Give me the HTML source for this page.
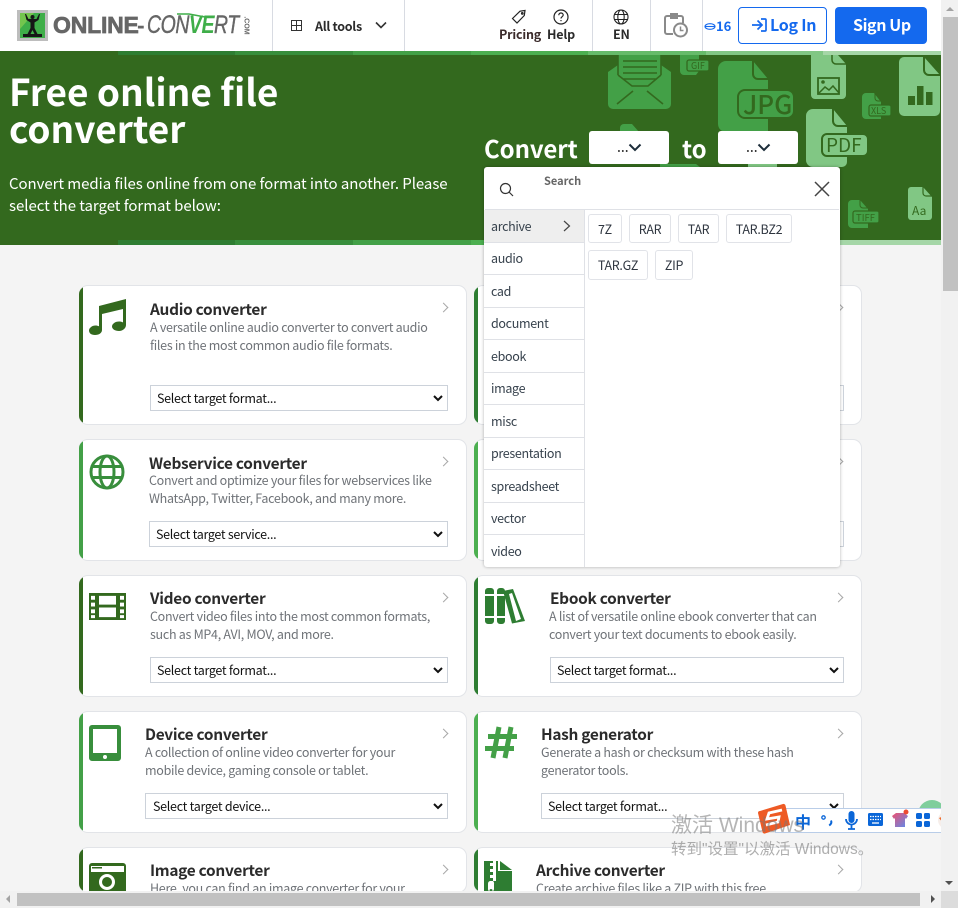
<!DOCTYPE html>
<html lang="en"><head><meta charset="utf-8"><title>Online-Convert</title>
<style>
*{box-sizing:border-box;margin:0;padding:0}
html,body{width:958px;height:908px;overflow:hidden;background:#f4f4f4}
body{position:relative;font-family:"Noto Sans CJK JP","Liberation Sans",sans-serif;color:#212529}
.a{position:absolute}
.t{position:absolute;white-space:nowrap}
.div{position:absolute;top:0;width:1px;height:51px;background:#d8dbe2}
.card{position:absolute;width:388px;background:#fff;border:1px solid #e2e4e8;border-left:0;border-radius:9px;overflow:hidden}
.card i{position:absolute;left:0;top:-1px;bottom:-1px;width:4px;display:block}
.card h3{position:absolute;font-size:15.4px;line-height:20px;font-weight:700;color:#2b2b2b;white-space:nowrap;letter-spacing:-.28px;margin-top:-1px}
.card p{position:absolute;font-size:12.5px;line-height:18px;color:#6f7378;white-space:nowrap;letter-spacing:-.29px}
.card select{position:absolute;height:26px;background:#fff;border:1px solid #ccd2da;font:12.5px "Noto Sans CJK JP",sans-serif;letter-spacing:-.29px;color:#111;padding-left:6px;border-radius:0;line-height:18px;appearance:none;-webkit-appearance:none}
.card svg.ar{position:absolute;width:10px;height:7px}
.card b.c{position:absolute;top:18px;right:19px;width:7px;height:7px;border-top:1.4px solid #a8a8a8;border-right:1.4px solid #a8a8a8;transform:rotate(45deg)}
.li{position:absolute;left:0;width:100px;height:32.5px;border-bottom:1px solid #dfe1e6;font-size:12.5px;letter-spacing:-.33px;line-height:31px;padding-left:7px;color:#37424d}
.chip{position:absolute;height:29px;border:1px solid #e1e3e8;border-radius:3px;font-size:12.5px;letter-spacing:-.3px;line-height:27px;text-align:center;color:#2f3640;background:#fff}
.n{font-size:12.5px;line-height:17px;font-weight:700;letter-spacing:-.2px}
</style></head><body>

<!-- header -->
<div class="a" style="left:0;top:0;width:941px;height:51px;background:#fff"></div>
<div class="a" style="left:17px;top:10px;width:31px;height:31px;background:#bdbdbd"></div>
<svg class="a" style="left:20px;top:13px" width="25" height="25" viewBox="0 0 25 25"><rect width="25" height="25" fill="#3fae49"/><path d="M0 0h14L0 16z" fill="#74c54e"/><circle cx="12.500" cy="4" r="2" fill="#161616"/><path d="M5 1l1.500 6 4 2.500V15l-3 6h3l2-4 2 4h3l-3-6V9.500l4-2.500L20 1l-1 0-2.500 5h-8L6 1z" fill="#161616"/><path d="M3 21h19v3H3z" fill="#161616"/></svg>
<div class="t" style="left:53px;top:11px;font:900 23px/28px 'Liberation Sans',sans-serif;color:#666;letter-spacing:-.2px;-webkit-text-stroke:.7px #666">ONLINE</div>
<div class="t" style="left:137px;top:11px;font:700 23px/28px 'Liberation Sans',sans-serif;color:#666">-</div>
<div class="t" style="left:147px;top:11px;font:italic 400 25px/28px 'Liberation Sans',sans-serif;color:#666;letter-spacing:-.6px;transform:scaleX(.78);transform-origin:0 0;-webkit-text-stroke:.4px #666">CON<span style="color:#3fae49;font-weight:700;-webkit-text-stroke:0">VE</span>RT</div>
<svg class="a" style="left:176px;top:13px" width="30" height="6" viewBox="0 0 30 6" fill="none" stroke="#3fae49" stroke-width="1.600"><path d="M1 1h12l16 3"/></svg>
<div class="t" style="left:237px;top:21px;font:700 7px/9px 'Liberation Sans',sans-serif;color:#666;transform:rotate(90deg)">.COM</div>
<div class="div" style="left:272px"></div><div class="div" style="left:404px"></div><div class="div" style="left:592px"></div><div class="div" style="left:650px"></div><div class="div" style="left:702px"></div>
<svg class="a" style="left:291px;top:20px" width="11" height="11" viewBox="0 0 11 11" fill="none" stroke="#333" stroke-width="1"><rect x=".5" y=".5" width="10" height="10"/><path d="M5.500 0v11M0 5.500h11"/></svg>
<div class="t" style="left:315px;top:17px;font-size:12.500px;line-height:18px;font-weight:700;letter-spacing:-.3px;color:#2b2b2b">All tools</div>
<svg class="a" style="left:375px;top:21px" width="12" height="9" viewBox="0 0 12 9" fill="none" stroke="#333" stroke-width="1.600"><path d="M1 1.500l5 5 5-5"/></svg>
<svg class="a" style="left:511px;top:9px" width="16" height="16" viewBox="0 0 16 16" fill="none" stroke="#222" stroke-width="1.200"><path d="M1.500 9.500L9 2.200l5-.7-.7 5L6 14z"/><circle cx="11.300" cy="4.400" r=".8"/></svg>
<div class="t n" style="left:499px;top:25px;color:#3b2b2b">Pricing</div>
<svg class="a" style="left:553px;top:9px" width="16" height="16" viewBox="0 0 16 16" fill="none" stroke="#222" stroke-width="1.200"><circle cx="8" cy="8" r="7"/><path d="M5.800 6.200C5.800 4.800 6.800 4 8 4s2.200.8 2.200 2c0 1.700-2.200 1.700-2.200 3.500"/><path d="M8 11v1.200"/></svg>
<div class="t n" style="left:547px;top:25px;color:#2b2b2b">Help</div>
<svg class="a" style="left:613px;top:9px" width="16" height="16" viewBox="0 0 16 16" fill="none" stroke="#222" stroke-width="1.100"><circle cx="8" cy="8" r="7"/><ellipse cx="8" cy="8" rx="3.200" ry="7"/><path d="M1.500 5.500h13M1.500 10.500h13"/></svg>
<div class="t n" style="left:613px;top:25px;color:#2b2b2b">EN</div>
<svg class="a" style="left:664px;top:13px" width="24" height="25" viewBox="0 0 24 25" fill="none" stroke="#8a8a8a" stroke-width="2"><path d="M9 21H3a2 2 0 0 1-2-2V5a2 2 0 0 1 2-2h14a2 2 0 0 1 2 2v5"/><path d="M7 1h6v4H7z" fill="#8a8a8a"/><circle cx="16.500" cy="17" r="6.500"/><path d="M16.500 13.500V17.500h3" stroke-width="1.500"/></svg>
<svg class="a" style="left:704px;top:23px" width="12" height="7" viewBox="0 0 12 7" fill="none" stroke="#1469ee" stroke-width="1.100"><ellipse cx="6" cy="3.500" rx="5" ry="2.800"/><path d="M1 3.500h10"/></svg>
<div class="t" style="left:716px;top:17px;font-size:13px;line-height:18px;font-weight:700;color:#1469ee">16</div>
<div class="a" style="left:738px;top:7px;width:89px;height:37px;border:1px solid #1469ee;border-radius:4px;background:#fff"></div>
<svg class="a" style="left:751px;top:18px" width="16" height="14" viewBox="0 0 16 14" fill="none" stroke="#1469ee" stroke-width="1.700"><path d="M1 7h9M6.500 2.500L11 7l-4.500 4.500M10 1h4a1 1 0 0 1 1 1v10a1 1 0 0 1-1 1h-4"/></svg>
<div class="t" style="left:770px;top:12px;font-size:16px;line-height:24px;font-weight:700;letter-spacing:-.25px;color:#1469ee">Log In</div>
<div class="a" style="left:835px;top:7px;width:92px;height:37px;border-radius:4px;background:#1469ee"></div>
<div class="t" style="left:853px;top:12px;font-size:16px;line-height:24px;font-weight:700;letter-spacing:-.4px;color:#fff">Sign Up</div>

<!-- hero -->
<div class="a" style="left:0;top:51px;width:941px;height:194px;background:#33691e"></div>
<div class="a" style="left:118px;top:51px;width:117px;height:4px;background:#2e7d32"></div><div class="a" style="left:235px;top:51px;width:118px;height:4px;background:#388e3c"></div><div class="a" style="left:353px;top:51px;width:118px;height:4px;background:#43a047"></div><div class="a" style="left:471px;top:51px;width:117px;height:4px;background:#4caf50"></div><div class="a" style="left:588px;top:51px;width:118px;height:4px;background:#66bb6a"></div><div class="a" style="left:706px;top:51px;width:117px;height:4px;background:#81c784"></div><div class="a" style="left:823px;top:51px;width:118px;height:4px;background:#a5d6a7"></div>
<div class="a" style="left:118px;top:240px;width:117px;height:5px;background:#2e7d32"></div><div class="a" style="left:235px;top:240px;width:118px;height:5px;background:#388e3c"></div><div class="a" style="left:353px;top:240px;width:118px;height:5px;background:#43a047"></div><div class="a" style="left:471px;top:240px;width:117px;height:5px;background:#4caf50"></div><div class="a" style="left:588px;top:240px;width:118px;height:5px;background:#66bb6a"></div><div class="a" style="left:706px;top:240px;width:117px;height:5px;background:#81c784"></div><div class="a" style="left:823px;top:240px;width:118px;height:5px;background:#a5d6a7"></div>

<svg class="a" style="left:600px;top:55px" width="341" height="185" viewBox="600 55 341 185">
<g fill="#43a047">
<path d="M618 55v10l-10 7v32a5 5 0 0 0 5 5h53a5 5 0 0 0 5-5V72l-10-7V55z"/>
<path d="M680 55h19v16l-3 4h-12a4 4 0 0 1-4-4z"/>
<path d="M726 61h27l15 18v53h-42a8 8 0 0 1-8-8V69a8 8 0 0 1 8-8z"/>
<path d="M866 93h8l7 9v17h-15a4 4 0 0 1-4-4V97a4 4 0 0 1 4-4z"/>
<path d="M852 200h8l8 9v19h-16a4 4 0 0 1-4-4v-20a4 4 0 0 1 4-4z"/>
<path d="M624 124h8l7 8v10h-19v-14a4 4 0 0 1 4-4z"/>
<path d="M660 164h36l4 3h-40z"/>
</g>
<g fill="#81c784">
<path d="M811 55h27l8 9v31a4 4 0 0 1-4 4h-27a4 4 0 0 1-4-4z"/>
<path d="M904 57h20l16 18v36a5 5 0 0 1-5 5h-31a5 5 0 0 1-5-5V62a5 5 0 0 1 5-5z"/>
<path d="M813 109h20l14 17v36a5 5 0 0 1-5 5h-29a7 7 0 0 1-7-7v-44a7 7 0 0 1 7-7z"/>
<path d="M911 187h12l9 10v20a3 3 0 0 1-3 3h-18a3 3 0 0 1-3-3v-27a3 3 0 0 1 3-3z"/>
<path d="M748 164h29v3h-29z"/>
</g>
<g fill="none" stroke="#33691e">
<path d="M618 55v20M661 55v20M623 61h34M623 67h34M623 73h34M623 79h34M618 75l14 11h16l13-11M617 104l16-13M663 104l-16-13" stroke-width="1.600"/>
<rect x="687" y="60" width="22" height="11" rx="2" fill="#43a047" stroke-width="1.300"/>
<path d="M753 61v13a5 5 0 0 0 5 5h10" stroke-width="2"/>
<rect x="738" y="90" width="56" height="28" rx="7" fill="#43a047" stroke-width="2"/>
<path d="M832 55v5a4 4 0 0 0 4 4h10" stroke-width="1.500"/>
<rect x="818" y="78" width="21" height="16" fill="#81c784" stroke-width="1.800"/>
<path d="M819 93l6-6 4 3 4-4 6 7" stroke-width="1.500"/>
<path d="M833 109v12a5 5 0 0 0 5 5h9" stroke-width="2"/>
<rect x="822" y="134" width="46" height="22" rx="5" fill="#81c784" stroke-width="2"/>
<path d="M924 57v13a5 5 0 0 0 5 5h11" stroke-width="2"/>
<rect x="869" y="105" width="22" height="11" rx="2" fill="#43a047" stroke-width="1.200"/>
<path d="M875 93v5a3 3 0 0 0 3 3h3" stroke-width="1"/>
<rect x="853" y="211" width="26" height="12" rx="2" fill="#43a047" stroke-width="1.200"/>
<path d="M860 200v5a3 3 0 0 0 3 3h5" stroke-width="1"/>
<path d="M923 187v6a3 3 0 0 0 3 3h6" stroke-width="1.200"/>
</g>
<circle cx="823" cy="82" r="1.800" fill="#33691e"/>
<g fill="#33691e"><rect x="908" y="96" width="7" height="9"/><rect x="917" y="86" width="6.500" height="19"/><rect x="926" y="92" width="6.500" height="13"/></g>
<g font-family="Noto Sans CJK JP,sans-serif" fill="#33691e">
<text x="691" y="69" font-size="9">GIF</text>
<text x="743" y="114" font-size="26" font-weight="500" letter-spacing="0">JPG</text>
<text x="826" y="152" font-size="19">PDF</text>
<text x="871" y="114" font-size="9">XLS</text>
<text x="856" y="221" font-size="9.500">TIFF</text>
<text x="912" y="215" font-size="12">Aa</text>
</g>
</svg>

<div class="t" style="left:9px;top:73px;font-size:37px;line-height:37px;font-weight:700;color:#fff;margin-top:-1px">Free online file<br>converter</div>
<div class="t" style="left:9px;top:173px;font-size:15px;line-height:22px;letter-spacing:-.05px;color:#fff">Convert media files online from one format into another. Please<br>select the target format below:</div>
<div class="t" style="left:484px;top:131px;font-size:24px;line-height:34px;font-weight:700;letter-spacing:-.1px;color:#fff">Convert</div>
<div class="t" style="left:682px;top:131px;font-size:24px;line-height:34px;font-weight:700;color:#fff">to</div>
<div class="a" style="left:589px;top:131px;width:80px;height:33px;background:#fff;border-radius:3px"></div>
<div class="a" style="left:718px;top:131px;width:80px;height:33px;background:#fff;border-radius:3px"></div>
<div class="t" style="left:617px;top:138px;font-size:14px;line-height:18px;color:#222">...</div>
<div class="t" style="left:746px;top:138px;font-size:14px;line-height:18px;color:#222">...</div>
<svg class="a" style="left:628px;top:143px" width="14" height="10" viewBox="0 0 14 10" fill="none" stroke="#1c2d3a" stroke-width="2"><path d="M1.500 1.500L7 7l5.500-5.500"/></svg>
<svg class="a" style="left:757px;top:143px" width="14" height="10" viewBox="0 0 14 10" fill="none" stroke="#1c2d3a" stroke-width="2"><path d="M1.500 1.500L7 7l5.500-5.500"/></svg>

<!-- cards -->
<div class="card" style="left:79px;top:285px;height:140px"><i style="background:#33691e"></i>
<svg class="a" style="left:10px;top:13px" width="38" height="37" viewBox="0 0 38 37" fill="#33691e"><path d="M10 7L37 0V26c0 3-3 6-7 6s-7-2-7-4.500 3-5 7-5c1.500 0 3 .3 4 1V10L13 15V31c0 3-3 5-7 5s-6-2-6-4.500 3-5 6.500-5c1.300 0 2.500.3 3.500.8z"/></svg>
<h3 style="left:71px;top:14px">Audio converter</h3><p style="left:71px;top:32px">A versatile online audio converter to convert audio<br>files in the most common audio file formats.</p>
<select style="left:71px;top:99px;width:298px"><option>Select target format...</option></select><svg class="ar" style="left:354px;top:109px" viewBox="0 0 10 7" fill="none" stroke="#111" stroke-width="2"><path d="M1 1l4 4 4-4"/></svg><b class="c"></b></div>

<div class="card" style="left:474px;top:285px;height:140px"><i style="background:#2e7d32"></i><select style="left:76px;top:99px;width:294px"><option>Select target format...</option></select><b class="c"></b></div>

<div class="card" style="left:79px;top:439px;height:122px"><i style="background:#43a047"></i>
<svg class="a" style="left:10px;top:14px" width="36" height="36" viewBox="0 0 36 36" fill="none" stroke="#388e3c" stroke-width="3"><circle cx="18" cy="18" r="16"/><ellipse cx="18" cy="18" rx="7" ry="16"/><path d="M3 12.500h30M3 23.500h30"/></svg>
<h3 style="left:70px;top:14px">Webservice converter</h3><p style="left:70px;top:31px">Convert and optimize your files for webservices like<br>WhatsApp, Twitter, Facebook, and many more.</p>
<select style="left:70px;top:81px;width:299px"><option>Select target service...</option></select><svg class="ar" style="left:354px;top:91px" viewBox="0 0 10 7" fill="none" stroke="#111" stroke-width="2"><path d="M1 1l4 4 4-4"/></svg><b class="c"></b></div>

<div class="card" style="left:474px;top:439px;height:122px"><i style="background:#4caf50"></i><select style="left:76px;top:81px;width:294px"><option>Select target format...</option></select><b class="c"></b></div>

<div class="card" style="left:79px;top:575px;height:122px"><i style="background:#33691e"></i>
<svg class="a" style="left:10px;top:17px" width="37" height="27" viewBox="0 0 37 28" preserveAspectRatio="none" fill="#33691e"><path fill-rule="evenodd" d="M0 0h37v28H0zM2 3v4h4V3zm0 7v4h4v-4zm0 7v4h4v-4zm0 6v3h4v-3zM31 3v4h4V3zm0 7v4h4v-4zm0 7v4h4v-4zm0 6v3h4v-3zM10 3v9h17V3zm0 12v10h17V15z"/></svg>
<h3 style="left:71px;top:13px">Video converter</h3><p style="left:71px;top:31px">Convert video files into the most common formats,<br>such as MP4, AVI, MOV, and more.</p>
<select style="left:71px;top:81px;width:298px"><option>Select target format...</option></select><svg class="ar" style="left:354px;top:91px" viewBox="0 0 10 7" fill="none" stroke="#111" stroke-width="2"><path d="M1 1l4 4 4-4"/></svg><b class="c"></b></div>

<div class="card" style="left:474px;top:575px;height:122px"><i style="background:#2e7d32"></i>
<svg class="a" style="left:10px;top:12px" width="42" height="36" viewBox="0 0 42 36" fill="#2e7d32"><path d="M1 3a3 3 0 0 1 3-3h3a3 3 0 0 1 3 3v3H1zM1 8h9v20H1zM1 30h9v3a3 3 0 0 1-3 3H4a3 3 0 0 1-3-3zM13 3a3 3 0 0 1 3-3h2a3 3 0 0 1 3 3v3h-8zM13 8h8v20h-8zM13 30h8v3a3 3 0 0 1-3 3h-2a3 3 0 0 1-3-3z"/><path fill-rule="evenodd" d="M19 3l10-2 12 32-13 2.500zM25 6l7 27 5-2-9-26z"/></svg>
<h3 style="left:76px;top:13px">Ebook converter</h3><p style="left:75px;top:31px">A list of versatile online ebook converter that can<br>convert your text documents to ebook easily.</p>
<select style="left:76px;top:81px;width:294px"><option>Select target format...</option></select><svg class="ar" style="left:355px;top:91px" viewBox="0 0 10 7" fill="none" stroke="#111" stroke-width="2"><path d="M1 1l4 4 4-4"/></svg><b class="c"></b></div>

<div class="card" style="left:79px;top:711px;height:122px"><i style="background:#43a047"></i>
<svg class="a" style="left:10px;top:13px" width="32" height="36" viewBox="0 0 32 36" fill="#388e3c"><path fill-rule="evenodd" d="M3 0h26a3 3 0 0 1 3 3v30a3 3 0 0 1-3 3H3a3 3 0 0 1-3-3V3a3 3 0 0 1 3-3zM4 4v24h24V4zm12 26a2 2 0 1 0 0 4 2 2 0 0 0 0-4z"/></svg>
<h3 style="left:66px;top:13px">Device converter</h3><p style="left:66px;top:31px">A collection of online video converter for your<br>mobile device, gaming console or tablet.</p>
<select style="left:66px;top:81px;width:303px;padding-left:7px"><option>Select target device...</option></select><svg class="ar" style="left:354px;top:91px" viewBox="0 0 10 7" fill="none" stroke="#111" stroke-width="2"><path d="M1 1l4 4 4-4"/></svg><b class="c"></b></div>

<div class="card" style="left:474px;top:711px;height:122px"><i style="background:#4caf50"></i>
<svg class="a" style="left:11px;top:14px" width="32" height="33" viewBox="0 0 32 33" fill="none" stroke="#43a047" stroke-width="5"><path d="M14 1L8 32M26 1l-6 31M3 10.500h29M0 22.500h29"/></svg>
<h3 style="left:67px;top:13px">Hash generator</h3><p style="left:67px;top:31px">Generate a hash or checksum with these hash<br>generator tools.</p>
<select style="left:67px;top:81px;width:303px"><option>Select target format...</option></select><svg class="ar" style="left:355px;top:91px" viewBox="0 0 10 7" fill="none" stroke="#111" stroke-width="2"><path d="M1 1l4 4 4-4"/></svg><b class="c"></b></div>

<div class="card" style="left:79px;top:847px;height:46px"><i style="background:#33691e"></i>
<svg class="a" style="left:10px;top:15px" width="37" height="32" viewBox="0 0 37 32" fill="#33691e"><path fill-rule="evenodd" d="M3 0h31a3 3 0 0 1 3 3v26a3 3 0 0 1-3 3H3a3 3 0 0 1-3-3V3a3 3 0 0 1 3-3zM2 3v6h33V3zm16 8a8 8 0 1 0 0 16 8 8 0 0 0 0-16zm0 3a5 5 0 1 1 0 10 5 5 0 0 1 0-10z"/><rect x="3" y="4" width="10" height="1.500" fill="#33691e"/></svg>
<h3 style="left:71px;top:13px">Image converter</h3><p style="left:71px;top:31px">Here, you can find an image converter for your</p><b class="c"></b></div>

<div class="card" style="left:474px;top:847px;height:46px"><i style="background:#2e7d32"></i>
<svg class="a" style="left:10px;top:13px" width="28" height="31" viewBox="0 0 28 36" preserveAspectRatio="xMinYMin slice" fill="#2e7d32"><path fill-rule="evenodd" d="M0 0h9v2H6v3h3v3H6v3h3v3H6v3h3v3H6a3 3 0 0 0-2 3v5a3 3 0 0 0 6 0v-5a3 3 0 0 0-1-3h3V0h2v10h14v26H0zM7 28a1.500 1.500 0 1 1 0 3 1.500 1.500 0 0 1 0-3z"/><path d="M16 0l12 9H16z"/></svg>
<h3 style="left:62px;top:13px">Archive converter</h3><p style="left:62px;top:31px">Create archive files like a ZIP with this free</p><b class="c"></b></div>

<!-- dropdown panel -->
<div class="a" style="left:484px;top:167px;width:356px;height:400px;background:#fff;border-radius:3px;box-shadow:0 0 3px rgba(0,0,0,.3);overflow:hidden">
<svg class="a" style="left:15px;top:15px" width="15" height="15" viewBox="0 0 15 15" fill="none" stroke="#333" stroke-width="1.200"><circle cx="6.500" cy="6.500" r="5"/><path d="M10 10l4 4"/></svg>
<div class="t" style="left:60px;top:6px;font-size:11px;line-height:16px;font-weight:700;color:#666">Search</div>
<svg class="a" style="left:330px;top:14px" width="16" height="16" viewBox="0 0 16 16" fill="none" stroke="#444" stroke-width="1.500"><path d="M1 1l14 14M15 1L1 15"/></svg>
<div class="a" style="left:1px;top:42px;width:354px;height:1px;background:#dfe1e6"></div>
<div class="a" style="left:100px;top:43px;width:1px;height:357px;background:#dfe1e6"></div>
<div class="li" style="top:43px;background:#eee">archive<svg class="a" style="left:79px;top:10px" width="8" height="12" viewBox="0 0 8 12" fill="none" stroke="#444" stroke-width="1.200"><path d="M1 1l5.500 5L1 11"/></svg></div>
<div class="li" style="top:75px">audio</div><div class="li" style="top:108px">cad</div><div class="li" style="top:140px">document</div><div class="li" style="top:173px">ebook</div><div class="li" style="top:205px">image</div><div class="li" style="top:238px">misc</div><div class="li" style="top:270px">presentation</div><div class="li" style="top:303px">spreadsheet</div><div class="li" style="top:335px">vector</div><div class="li" style="top:368px;border:0">video</div>
<div class="chip" style="left:104px;top:47px;width:34px">7Z</div><div class="chip" style="left:145px;top:47px;width:42px">RAR</div><div class="chip" style="left:194px;top:47px;width:41px">TAR</div><div class="chip" style="left:242px;top:47px;width:66px">TAR.BZ2</div>
<div class="chip" style="left:104px;top:83px;width:60px;height:30px;line-height:28px">TAR.GZ</div><div class="chip" style="left:171px;top:83px;width:38px;height:30px;line-height:28px">ZIP</div>
</div>

<!-- IME / watermark -->
<div class="a" style="left:918px;top:800px;width:28px;height:28px;border-radius:50%;background:#7fce9c"></div>
<div class="a" style="left:775px;top:808px;width:183px;height:25px;background:#fff;border:1px solid #b9cde8;border-right:0"></div>
<svg class="a" style="left:757px;top:802px" width="34" height="32" viewBox="0 0 34 32"><path d="M3 9L26 2a2 2 0 0 1 2.500 1.500L33 23l-25 8.500a2 2 0 0 1-2.500-1.500L1 11a2 2 0 0 1 2-2z" fill="#ee5a24"/><path d="M25 8l-13 3-2 6 12-2-1 5-12 3" fill="none" stroke="#fff" stroke-width="2.800"/></svg>
<div class="t" style="left:795px;top:811px;font-size:16px;line-height:20px;font-weight:700;color:#0a66d8">中</div>
<svg class="a" style="left:820px;top:814px" width="14" height="13" viewBox="0 0 14 13" fill="none" stroke="#0a66d8"><circle cx="3.500" cy="3.500" r="1.700" stroke-width="1.300"/><path d="M11 6.500c.8 1.800 0 3.700-1.800 5" stroke-width="2"/></svg>
<svg class="a" style="left:845px;top:811px" width="13" height="19" viewBox="0 0 13 19" fill="none" stroke="#0a66d8" stroke-width="1.800"><rect x="3.500" y="0" width="6" height="12" rx="3" fill="#0a66d8" stroke="none"/><path d="M1 8a5.500 5.500 0 0 0 11 0M6.500 14v4M3 18h7"/></svg>
<svg class="a" style="left:868px;top:813px" width="15" height="13" viewBox="0 0 15 13"><rect width="15" height="13" rx="1.500" fill="#0a66d8"/><path d="M2 3.500h11M2 6.500h11" stroke="#fff" stroke-width="1.300" stroke-dasharray="1.500 1"/><path d="M4 10h7" stroke="#fff" stroke-width="1.300"/></svg>
<svg class="a" style="left:891px;top:809px" width="18" height="19" viewBox="0 0 18 19"><defs><linearGradient id="g" x1="0" y1="0" x2="1" y2="1"><stop offset="0" stop-color="#f0506e"/><stop offset="1" stop-color="#5a8cf0"/></linearGradient></defs><path d="M1 7l4-3h8l4 3-2 3-1-1v9H4V9l-1 1z" fill="url(#g)"/><circle cx="15" cy="3" r="2.500" fill="#ee4a30"/></svg>
<svg class="a" style="left:916px;top:813px" width="14" height="14" viewBox="0 0 14 14" fill="#0a66d8"><rect width="6" height="6" rx="1.500"/><rect x="8" width="6" height="6" rx="1.500"/><rect y="8" width="6" height="6" rx="1.500"/><rect x="8" y="8" width="6" height="6" rx="1.500"/></svg>
<svg class="a" style="left:937px;top:811px" width="21" height="18" viewBox="0 0 21 18"><circle cx="10" cy="9" r="9" fill="#f6eeea"/><path d="M2 7c4-2 10-3 14-2l-1 4-9 3z" fill="#ee6a2a"/><circle cx="6" cy="9" r="1" fill="#222"/></svg>
<div class="t" style="left:671px;top:812px;font-size:21px;line-height:28px;color:rgba(120,120,120,.55);font-family:'Liberation Sans','Noto Sans CJK SC',sans-serif">激活 Windows</div>
<div class="t" style="left:671px;top:839px;font-size:15.500px;line-height:21px;color:rgba(120,120,120,.6);font-family:'Liberation Sans','Noto Sans CJK SC',sans-serif">转到"设置"以激活 Windows。</div>

<!-- scrollbars -->
<div class="a" style="left:941px;top:0;width:17px;height:891px;background:#f1f1f1"></div>
<div class="a" style="left:943px;top:17px;width:15px;height:274px;background:#c1c1c1"></div>
<div class="a" style="left:946px;top:7px;width:0;height:0;border:4px solid transparent;border-top:0;border-bottom:4px solid #a3a3a3"></div>
<div class="a" style="left:945px;top:881px;width:0;height:0;border:4px solid transparent;border-bottom:0;border-top:4px solid #505050"></div>
<div class="a" style="left:0;top:891px;width:941px;height:17px;background:#f1f1f1"></div>
<div class="a" style="left:17px;top:893px;width:903px;height:13px;background:#c1c1c1"></div>
<div class="a" style="left:6px;top:895px;width:0;height:0;border:4px solid transparent;border-left:0;border-right:4px solid #a3a3a3"></div>
<div class="a" style="left:931px;top:895px;width:0;height:0;border:4px solid transparent;border-right:0;border-left:4px solid #505050"></div>
<div class="a" style="left:941px;top:891px;width:17px;height:17px;background:#dcdcdc"></div>
</body></html>
